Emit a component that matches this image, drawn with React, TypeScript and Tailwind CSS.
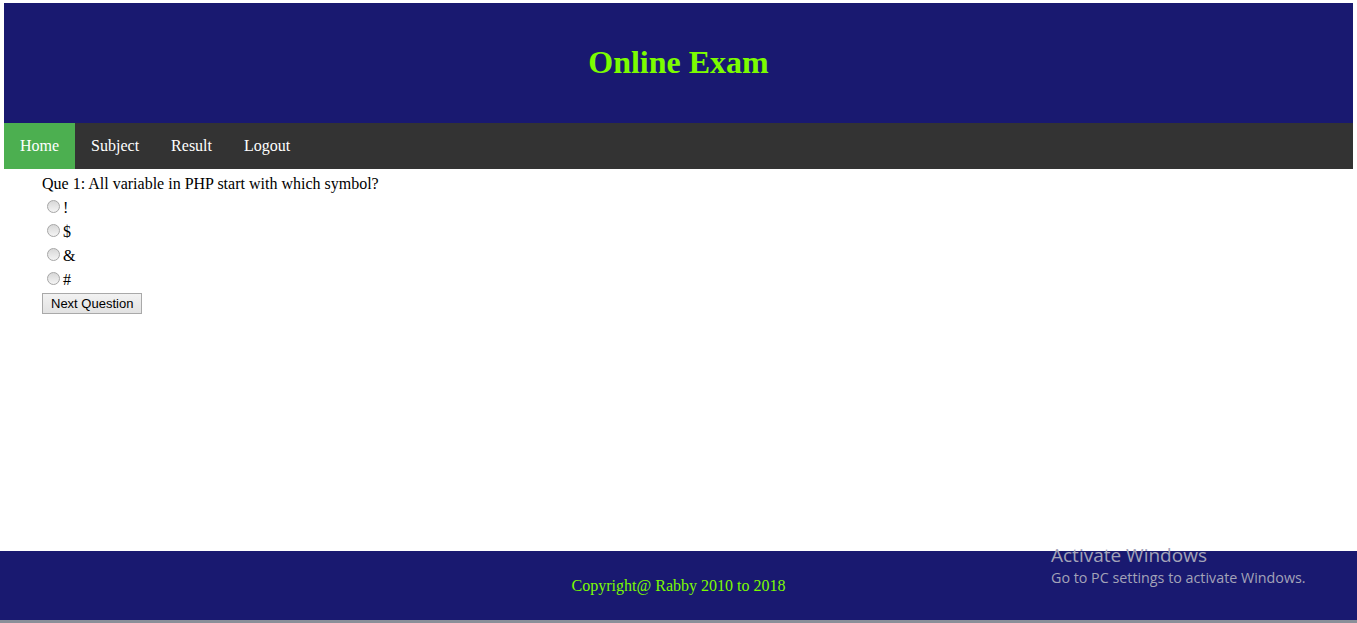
export default function App() {
  const options = ["!", "$", "&", "#"];
  const links = ["Home", "Subject", "Result", "Logout"];

  return (
    <div className="relative flex h-[623px] flex-col bg-white font-['Liberation_Serif',serif] text-black">
      <div className="px-[4px] pt-[3px]">
        <header className="flex h-[120px] items-center justify-center bg-[#191970]">
          <h1 className="pb-[2px] text-[32px] font-bold text-[#7cfc00]">Online Exam</h1>
        </header>
        <nav className="flex h-[46px] bg-[#333333]">
          {links.map((link, i) => (
            <a
              key={link}
              className={`flex items-center px-[16px] text-[16px] text-white ${i === 0 ? "bg-[#4caf50]" : ""}`}
            >
              {link}
            </a>
          ))}
        </nav>
      </div>

      <main className="flex-1 pl-[42px] pt-[6px] text-[16px]">
        <p className="h-[24px] leading-[18px]">Que 1: All variable in PHP start with which symbol?</p>
        {options.map((opt) => (
          <label key={opt} className="flex h-[24px] items-start">
            <span className="ml-[5px] mr-[3px] mt-[1px] h-[13px] w-[13px] rounded-full border border-[#a6a6a6] bg-gradient-to-b from-[#d8d8d8] to-[#f4f4f4]"></span>
            <span className="leading-[18px]">{opt}</span>
          </label>
        ))}
        <button className="-mt-[2px] block h-[21px] border border-[#a9a9a9] bg-gradient-to-b from-[#f2f2f2] to-[#e2e2e2] px-[8px] font-['Liberation_Sans',sans-serif] text-[13px] leading-[19px]">
          Next Question
        </button>
      </main>

      <footer className="flex h-[69px] items-center justify-center bg-[#191970] pt-[1px]">
        <p className="text-[16px] text-[#7cfc00]">Copyright@ Rabby 2010 to 2018</p>
      </footer>
      <div className="h-[3px] bg-[#8a8f99]"></div>

      <div className="absolute left-[1051px] top-[542px] font-['Open_Sans',sans-serif] text-[#a3a3b8]">
        <p className="text-[19px] leading-[26px]">Activate Windows</p>
        <p className="text-[14.3px] leading-[20px]">Go to PC settings to activate Windows.</p>
      </div>
    </div>
  );
}
